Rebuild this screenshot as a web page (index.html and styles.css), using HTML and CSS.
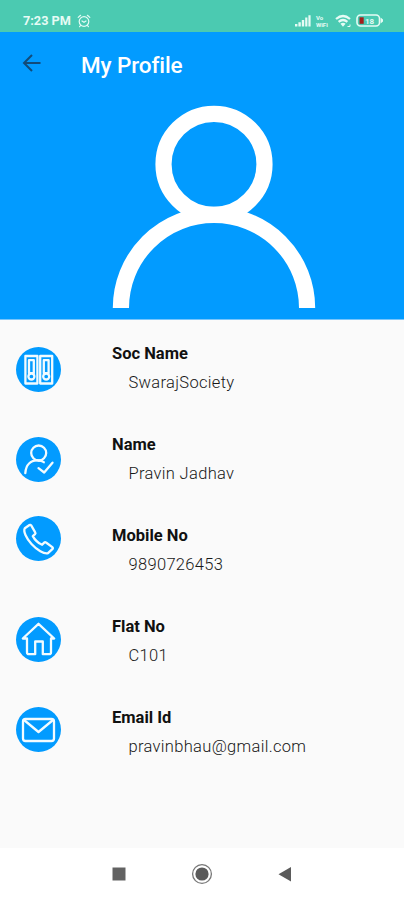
FILE: index.html
```
<!DOCTYPE html>
<html lang="en">
<head>
<meta charset="utf-8">
<title>My Profile</title>
<link rel="stylesheet" href="styles.css">
</head>
<body>
<div class="phone">
  <div class="status">
    <span class="time">7:23 PM</span>
    <svg class="alarm" width="14" height="14" viewBox="0 0 14 14" fill="none" stroke="currentColor" stroke-width="1.2" stroke-linecap="round"><circle cx="7" cy="7.5" r="4.8"/><path d="M1.2 3.4 3.6 1.3M12.8 3.4 10.4 1.3M3.5 11.5 2.6 12.7M10.5 11.5l.9 1.2M5 7l2 1.2L9 7"/></svg>
    <div class="signals">
      <svg width="17" height="13" viewBox="0 0 17 13" fill="currentColor"><path d="M0 10h2.4v2.5H0zM3.4 8.2h2.4v4.3H3.4zM6.8 6h2.4v6.5H6.8zM10.2 3.6h2.2v8.9h-2.2zM13.4 1.2h2.2v11.3h-2.2z"/></svg>
      <span class="vowifi"><span>Vo</span><span>WiFi</span></span>
      <svg class="wifi" width="17" height="14" viewBox="0 0 17 14" fill="none" stroke="currentColor" stroke-width="2.2"><path d="M1 5q7-6 14 0M3.6 7.8q4.400-3.600 8.800 0"/><path d="M5.400 9.800q2.600-2 5.200 0L8 12.800z" fill="currentColor" stroke="none"/><path d="M12.500 12.500h2.500v-2" stroke-width="1"/></svg>
      <svg class="battery" width="28" height="13" viewBox="0 0 28 13"><rect x="1" y="1" width="22.500" height="11" rx="3.500" fill="none" stroke="currentColor" stroke-width="1.600"/><path d="M24.600 3.500 27 5.500v2l-2.400 2z" fill="currentColor"/><rect x="3.500" y="3.300" width="4.200" height="6.500" fill="#a31f1c"/><text x="9" y="9.700" class="charge">18</text></svg>
    </div>
  </div>
  <header class="hero">
    <div class="bar">
      <svg class="back" width="20" height="20" viewBox="0 0 20 20" fill="none" stroke="currentColor" stroke-width="2"><path d="M18.500 10H2.500M10 2 2 10l8 8"/></svg>
      <h1>My Profile</h1>
    </div>
    <svg class="avatar" width="204" height="204" viewBox="0 0 204 204" fill="none" stroke="#fff" stroke-width="16.200"><circle cx="102" cy="60.300" r="50.500"/><path d="M8.900 204a93.100 93.100 0 0 1 186.200 0"/></svg>
  </header>
  <main>
    <section class="row">
      <svg class="icon society" viewBox="0 0 45 45"><circle class="disc" cx="22.500" cy="22.500" r="22.500"/><g class="line"><path d="M9.400 9h12v27.500h-12zM24.200 9h12v27.500h-12zM13 13.200h4.800v13H13zM27.800 13.200h4.800v13h-4.800z"/><circle class="knob" cx="15.400" cy="29.500" r="3"/><circle class="knob" cx="30.200" cy="29.500" r="3"/></g></svg>
      <div class="text"><h2>Soc Name</h2><p>SwarajSociety</p></div>
    </section>
    <section class="row">
      <svg class="icon person" viewBox="0 0 45 45"><circle class="disc" cx="22.500" cy="22.500" r="22.500"/><g class="line"><circle cx="22.700" cy="16" r="7.500"/><path d="M9.300 36.200C10 27.500 15 23 22.500 23.500q3 0 5.300 1.700M22.500 31.200l5.700 4.300 8.300-9.800"/></g></svg>
      <div class="text"><h2>Name</h2><p>Pravin Jadhav</p></div>
    </section>
    <section class="row">
      <svg class="icon phone-icon" viewBox="0 0 45 45"><circle class="disc" cx="22.500" cy="22.500" r="22.500"/><path class="line" d="M13.500 9 8.800 12.200C7 15.500 10.500 22.500 15.500 28c5.500 6 12.500 10.200 16.500 9.200l4.600-4.300c.5-.6.300-1.200-.3-1.700l-6.300-4.700c-.6-.5-1.300-.4-1.800.1l-2.100 2.200c-4.300-2-7.300-4.900-9.300-8.700l2.200-2c.5-.5.600-1.200.2-1.800L15.200 9.400c-.4-.6-1.100-.8-1.700-.4z"/></svg>
      <div class="text"><h2>Mobile No</h2><p>9890726453</p></div>
    </section>
    <section class="row">
      <svg class="icon home" viewBox="0 0 45 45"><circle class="disc" cx="22.500" cy="22.500" r="22.500"/><path class="line" d="M6.800 21.500 22.500 6.800l15.700 14.700H35v13.700q0 2-2 2h-6.200V24.500h-7.600v12.700H13q-2 0-2-2V21.500z"/></svg>
      <div class="text"><h2>Flat No</h2><p>C101</p></div>
    </section>
    <section class="row">
      <svg class="icon mail" viewBox="0 0 45 45"><circle class="disc" cx="22.500" cy="22.500" r="22.500"/><g class="line"><rect x="7" y="12" width="31" height="22" rx="2.500"/><path d="m8 13 14.500 12L37 13"/></g></svg>
      <div class="text"><h2>Email Id</h2><p>pravinbhau@gmail.com</p></div>
    </section>
  </main>
  <nav>
    <svg width="22" height="22" viewBox="0 0 22 22"><path d="M4.500 4.500h13v13h-13z" fill="#626262"/></svg>
    <svg width="22" height="22" viewBox="0 0 22 22"><circle cx="11" cy="11" r="9.400" fill="none" stroke="#777" stroke-width="1.300"/><circle cx="11" cy="11" r="6.600" fill="#5b5b5b"/></svg>
    <svg width="22" height="22" viewBox="0 0 22 22"><path d="M17 4v14.500L4.500 11.200z" fill="#5b5b5b"/></svg>
  </nav>
</div>
</body>
</html>
```
FILE: styles.css
```
* { box-sizing: border-box; }
body { margin: 0; font-family: Roboto, sans-serif; }
h1, h2, p { margin: 0; }
svg { display: block; flex: none; }
.phone { width: 404px; height: 900px; display: flex; flex-direction: column; background: #fafafa; overflow: hidden; }
.status { height: 32px; flex: none; background: #4bcab1; color: #e6fbf5; display: flex; align-items: center; padding: 9px 20px 0 23px; }
.time { font-size: 12.7px; font-weight: 700; line-height: 16px; }
.alarm { margin-left: 6px; }
.signals { margin-left: auto; display: flex; align-items: center; }
.vowifi { display: flex; flex-direction: column; width: 15px; margin-left: 4px; font-size: 6px; line-height: 7px; font-weight: 700; }
.wifi { margin-left: 4px; }
.battery { margin-left: 4px; }
.charge { font-size: 8px; font-weight: 700; fill: currentColor; }
.hero { height: 288px; flex: none; background: #029bff; border-bottom: 1px solid #79c5fb; }
.bar { height: 63px; display: flex; align-items: center; padding-left: 22px; }
.back { color: #124b79; margin-top: -1px; }
h1 { color: #fff; font-size: 22.5px; font-weight: 500; line-height: 28px; margin: 2px 0 0 39px; letter-spacing: -0.1px; }
.avatar { margin: 9px 0 0 112px; }
main { flex: 1; min-height: 0; }
.row { height: 91px; display: flex; align-items: flex-start; padding-left: 16px; }
.icon { width: 45px; height: 45px; }
.disc { fill: #029bff; }
.line { fill: none; stroke: #f2fbff; stroke-width: 2.3; stroke-linejoin: round; stroke-linecap: round; }
.knob { fill: #029bff; }
.society { margin-top: 26.5px; }
.person { margin-top: 25.5px; }
.phone-icon { margin-top: 13.5px; }
.home { margin-top: 23.5px; }
.mail { margin-top: 22.5px; }
.text { margin-left: 51px; padding-top: 24px; }
h2 { font-size: 16.5px; font-weight: 700; line-height: 20px; color: #111; }
.text p { margin: 9px 0 0 16.5px; font-size: 16.5px; font-weight: 300; line-height: 20px; color: #181818; letter-spacing: 0.32px; }
nav { height: 52px; flex: none; background: #fff; display: flex; justify-content: center; align-items: center; gap: 61px; }
```
